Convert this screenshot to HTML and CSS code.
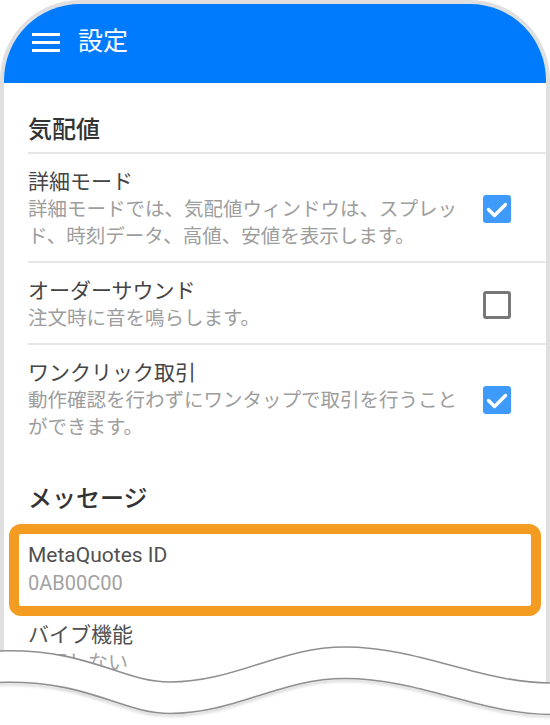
FILE: index.html
```html
<!DOCTYPE html>
<html lang="ja">
<head>
<meta charset="utf-8">
<title>設定</title>
<link rel="stylesheet" href="styles.css">
</head>
<body>
<div class="screen">
  <div class="phone">
    <header class="appbar">
      <span class="menu" aria-label="メニュー"><i></i><i></i><i></i></span>
      <h1 class="appbar-title">設定</h1>
    </header>
    <main class="settings">
      <h2 class="section-title">気配値</h2>
      <div class="row">
        <div class="row-text">
          <div class="row-title">詳細モード</div>
          <div class="row-desc">詳細モードでは、気配値ウィンドウは、スプレッド、時刻データ、高値、安値を表示します。</div>
        </div>
        <span class="checkbox checked"><svg viewBox="0 0 28 28" width="28" height="28"><polyline points="5.5,14.5 11.5,20.5 22.5,9.5" fill="none" stroke="#fff" stroke-width="3.4" stroke-linecap="round" stroke-linejoin="round"/></svg></span>
      </div>
      <div class="row">
        <div class="row-text">
          <div class="row-title">オーダーサウンド</div>
          <div class="row-desc">注文時に音を鳴らします。</div>
        </div>
        <span class="checkbox"></span>
      </div>
      <div class="row">
        <div class="row-text">
          <div class="row-title">ワンクリック取引</div>
          <div class="row-desc">動作確認を行わずにワンタップで取引を行うことができます。</div>
        </div>
        <span class="checkbox checked"><svg viewBox="0 0 28 28" width="28" height="28"><polyline points="5.5,14.5 11.5,20.5 22.5,9.5" fill="none" stroke="#fff" stroke-width="3.4" stroke-linecap="round" stroke-linejoin="round"/></svg></span>
      </div>
      <h2 class="section-title">メッセージ</h2>
      <div class="plain-row highlight">
        <div class="row-title">MetaQuotes ID</div>
        <div class="row-value">0AB00C00</div>
      </div>
      <div class="plain-row vib-row">
        <div class="row-title">バイブ機能</div>
        <div class="row-value">使用しない</div>
      </div>
    </main>
  </div>
  <svg class="tear" viewBox="0 0 550 100" width="550" height="100" aria-hidden="true">
    <defs>
      <filter id="sh" x="-5%" y="-50%" width="110%" height="200%">
        <feDropShadow dx="0" dy="2" stdDeviation="1.6" flood-color="#000" flood-opacity="0.28"/>
      </filter>
    </defs>
    <path d="M-2,26 C90,23 120,57 170,57 C235,57 280,22 345,22 C420,22 480,58 552,58 L552,100 L-2,100 Z" fill="#fff"/>
    <path d="M-2,26 C90,23 120,57 170,57 C235,57 280,22 345,22 C420,22 480,58 552,58" fill="none" stroke="#8f8f8f" stroke-width="1.6"/>
    <path d="M-2,57.5 C90,54.5 120,88.5 170,88.5 C235,88.5 280,53.5 345,53.5 C420,53.5 480,89.5 552,89.5" fill="none" stroke="#8f8f8f" stroke-width="1.6" filter="url(#sh)"/>
  </svg>
</div>
</body>
</html>
```
FILE: styles.css
```css
* { box-sizing: border-box; }
html, body { margin: 0; padding: 0; background: #fff; }
body {
  font-family: Roboto, "Noto Sans CJK JP", sans-serif;
  color: #444;
}
.screen {
  position: relative;
  width: 550px;
  height: 725px;
  overflow: hidden;
}
.phone {
  width: 550px;
  height: 725px;
  border: 4px solid #dfdfdf;
  border-bottom: 0;
  border-radius: 80px 80px 0 0;
  overflow: hidden;
  background: #fff;
}
.appbar {
  height: 79px;
  background: #007bfe;
  display: flex;
  align-items: center;
  gap: 18px;
  padding: 0 0 3px 28px;
}
.menu {
  display: flex;
  flex-direction: column;
  gap: 5px;
  width: 28px;
}
.menu i {
  display: block;
  height: 3px;
  background: #fff;
}
.appbar-title {
  margin: 0;
  font-size: 25px;
  font-weight: 400;
  color: #fff;
  line-height: 32px;
}
.settings {
  padding-left: 24px;
}
.section-title {
  margin: 0;
  padding: 31px 0 6px;
  font-size: 24px;
  line-height: 32px;
  font-weight: 500;
  color: #333;
}
.row {
  display: flex;
  align-items: center;
  gap: 17px;
  padding: 14px 35px 11px 0;
  border-top: 2px solid #e6e6e6;
}
.row-text {
  width: 438px;
}
.row-title {
  font-size: 21px;
  line-height: 28px;
  color: #454545;
}
.row-desc {
  font-size: 19.5px;
  line-height: 27px;
  color: #9d9d9d;
}
.checkbox {
  flex: 0 0 28px;
  width: 28px;
  height: 28px;
  border: 3px solid #777;
  border-radius: 3px;
  display: block;
}
.checkbox.checked {
  border: 0;
  background: #3f9bfb;
}
.checkbox svg { display: block; }
.plain-row {
  padding: 20px 0 6px;
}
.plain-row .row-title {
  font-size: 21px;
  color: #505050;
}
.row-value {
  font-size: 20px;
  line-height: 28px;
  color: #a2a2a2;
}
.vib-row {
  padding-top: 18px;
}
.highlight {
  position: relative;
}
.highlight::after {
  content: "";
  position: absolute;
  top: 3px;
  bottom: -13px;
  left: -19px;
  right: 5px;
  border: 10px solid #f49c22;
  border-radius: 12px;
}
.tear {
  position: absolute;
  left: 0;
  bottom: 0;
  display: block;
}
```
